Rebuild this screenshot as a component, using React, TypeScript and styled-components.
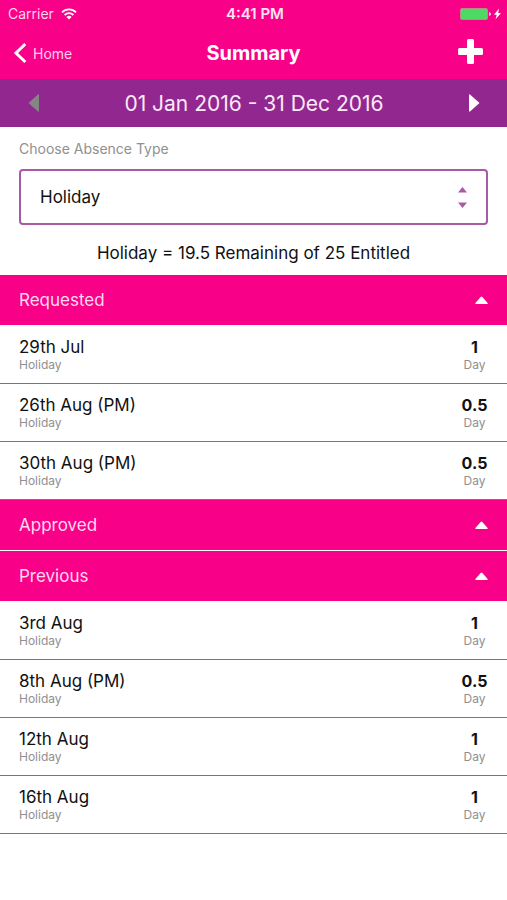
import React, { useState } from "react";
import styled, { createGlobalStyle } from "styled-components";

const pink = "#f90089";
const purple = "#92278f";
const orchid = "#a85aa6";

const GlobalStyle = createGlobalStyle`
  *, *::before, *::after { box-sizing: border-box; }
  body {
    margin: 0;
    background: #fff;
    color: #111;
    font-family: Inter, "Liberation Sans", sans-serif;
  }
  button, select { font: inherit; color: inherit; }
`;

const Screen = styled.main`
  min-height: 100vh;
`;

const TopBar = styled.header`
  background: ${pink};
  color: #fff;
`;

const StatusBar = styled.div`
  display: grid;
  grid-template-columns: 1fr auto 1fr;
  align-items: center;
  height: 27px;
  padding: 0 5px 0 8px;
  font-size: 14px;
`;

const Carrier = styled.div`
  display: flex;
  align-items: center;
  gap: 7px;
  color: #ffd3ec;
`;

const Clock = styled.time`
  font-size: 15px;
  font-weight: 600;
  color: #ffe3f3;
`;

const Battery = styled.div`
  display: flex;
  justify-content: flex-end;
`;

const NavBar = styled.nav`
  display: grid;
  grid-template-columns: 1fr auto 1fr;
  align-items: center;
  height: 52px;
  padding: 0 13px;
`;

const PlainButton = styled.button`
  display: flex;
  align-items: center;
  padding: 0;
  border: 0;
  background: none;
  cursor: pointer;
`;

const BackLink = styled.a`
  display: flex;
  align-items: center;
  gap: 6px;
  color: #ffd3ec;
  font-size: 14px;
  text-decoration: none;
`;

const Title = styled.h1`
  margin: 0;
  font-size: 20px;
  font-weight: 700;
`;

const AddButton = styled(PlainButton)`
  justify-self: end;
  padding: 0 11px 4px;
`;

const DateBar = styled.div`
  display: flex;
  align-items: center;
  justify-content: space-between;
  height: 48px;
  padding: 0 27px 0 28px;
  background: ${purple};
  color: #fbe9fa;
  font-size: 21px;
`;

const TypePanel = styled.section`
  display: flex;
  flex-direction: column;
  padding: 12px 19px 11px;
`;

const FieldLabel = styled.label`
  color: #909090;
  font-size: 14px;
  line-height: 20px;
`;

const SelectBox = styled.div`
  position: relative;
  margin: 10px 0 17px;
`;

const TypeSelect = styled.select`
  display: block;
  appearance: none;
  width: 100%;
  height: 56px;
  padding: 0 44px 0 19px;
  border: 2px solid ${orchid};
  border-radius: 4px;
  background: #fff;
  font-size: 17px;
`;

const SelectArrows = styled.svg`
  position: absolute;
  top: 18px;
  right: 21px;
  pointer-events: none;
`;

const Balance = styled.p`
  margin: 0;
  font-size: 17px;
  line-height: 22px;
  text-align: center;
`;

const SectionHeading = styled.h2`
  margin: 0;
  border-bottom: 1px solid #fff;
  font-size: 17px;
  font-weight: 400;
`;

const SectionToggle = styled(PlainButton)`
  justify-content: space-between;
  width: 100%;
  height: 50px;
  padding: 0 19px;
  background: ${pink};
  color: #ffd9ef;
`;

const Chevron = styled.svg<{ $open: boolean }>`
  transform: ${(p) => (p.$open ? "none" : "rotate(180deg)")};
`;

const List = styled.ul`
  margin: 0;
  padding: 0;
  list-style: none;
`;

const Row = styled.li`
  display: flex;
  align-items: center;
  justify-content: space-between;
  height: 58px;
  padding: 0 19px;
  border-bottom: 1px solid #777;
`;

const Amount = styled.div`
  width: 27px;
  text-align: center;
`;

const Line = styled.div`
  font-size: 17px;
  line-height: 20px;
`;

const Days = styled.div`
  font-size: 16px;
  font-weight: 700;
  line-height: 20px;
`;

const Sub = styled.div`
  color: #909090;
  font-size: 12px;
  line-height: 16px;
`;

type Absence = { date: string; days: string };

const sections: { name: string; items: Absence[] }[] = [
  {
    name: "Requested",
    items: [
      { date: "29th Jul", days: "1" },
      { date: "26th Aug (PM)", days: "0.5" },
      { date: "30th Aug (PM)", days: "0.5" },
    ],
  },
  { name: "Approved", items: [] },
  {
    name: "Previous",
    items: [
      { date: "3rd Aug", days: "1" },
      { date: "8th Aug (PM)", days: "0.5" },
      { date: "12th Aug", days: "1" },
      { date: "16th Aug", days: "1" },
    ],
  },
];

function Section({ name, items }: { name: string; items: Absence[] }) {
  const [open, setOpen] = useState(true);
  return (
    <section>
      <SectionHeading>
        <SectionToggle aria-expanded={open} onClick={() => setOpen(!open)}>
          {name}
          <Chevron $open={open} width="13" height="8" viewBox="0 0 13 8" aria-hidden="true">
            <path d="M0.8 8Q0 8 0.4 7L5.6 1Q6.5 0 7.4 1L12.6 7Q13 8 12.2 8Z" fill="#fff" />
          </Chevron>
        </SectionToggle>
      </SectionHeading>
      {open && (
        <List>
          {items.map((item) => (
            <Row key={item.date}>
              <div>
                <Line>{item.date}</Line>
                <Sub>Holiday</Sub>
              </div>
              <Amount>
                <Days>{item.days}</Days>
                <Sub>Day</Sub>
              </Amount>
            </Row>
          ))}
        </List>
      )}
    </section>
  );
}

export default function App() {
  return (
    <>
      <GlobalStyle />
      <Screen>
        <TopBar>
          <StatusBar>
            <Carrier>
              Carrier
              <svg width="16" height="12" viewBox="0 0 16 12" fill="none" stroke="#fff" strokeWidth="1.8" aria-hidden="true">
                <path d="M1 4.3a10 10 0 0 1 14 0" />
                <path d="M3.6 7a6.3 6.3 0 0 1 8.8 0" />
                <path d="M5.4 8.9a3.8 3.8 0 0 1 5.2 0L8 11.6Z" fill="#fff" stroke="none" />
              </svg>
            </Carrier>
            <Clock>4:41 PM</Clock>
            <Battery>
              <svg width="43" height="14" viewBox="0 0 43 14" role="img" aria-label="Battery charging">
                <rect x="1.5" y="1.5" width="27" height="11" rx="1.5" fill="#4cd964" stroke="#b98a86" />
                <path d="M30 5q2 .3 2 2t-2 2z" fill="#ffd3ec" />
                <path d="M40 1.5L35 7.8h2.7L36.5 12.5L42 6H39.2z" fill="#fff" />
              </svg>
            </Battery>
          </StatusBar>
          <NavBar>
            <BackLink href="#home">
              <svg width="14" height="22" viewBox="0 0 14 22" fill="none" stroke="#fff" strokeWidth="3" aria-hidden="true">
                <path d="M12.3 2L3 11l9.3 9" />
              </svg>
              Home
            </BackLink>
            <Title>Summary</Title>
            <AddButton aria-label="Add absence">
              <svg width="25" height="25" viewBox="0 0 25 25" fill="#fff" aria-hidden="true">
                <rect x="9" y="0" width="7" height="25" rx="1.5" />
                <rect x="0" y="9" width="25" height="7" rx="1.5" />
              </svg>
            </AddButton>
          </NavBar>
        </TopBar>
        <DateBar>
          <PlainButton aria-label="Previous period">
            <svg width="11" height="18" viewBox="0 0 11 18" aria-hidden="true">
              <path d="M11 1v16q0 1-1 .5L1 9.6Q.4 9 1 8.4L10 .5Q11 0 11 1Z" fill="#858585" />
            </svg>
          </PlainButton>
          <span>01 Jan 2016 - 31 Dec 2016</span>
          <PlainButton aria-label="Next period">
            <svg width="11" height="18" viewBox="0 0 11 18" aria-hidden="true">
              <path d="M0 1v16q0 1 1 .5L10 9.6Q10.6 9 10 8.4L1 .5Q0 0 0 1Z" fill="#fff" />
            </svg>
          </PlainButton>
        </DateBar>
        <TypePanel>
          <FieldLabel htmlFor="absence-type">Choose Absence Type</FieldLabel>
          <SelectBox>
            <TypeSelect id="absence-type">
              <option>Holiday</option>
            </TypeSelect>
            <SelectArrows width="9" height="22" viewBox="0 0 9 22" fill={orchid} aria-hidden="true">
              <path d="M0 5.5L4.5 0L9 5.5z" />
              <path d="M0 15.5L4.5 21L9 15.5z" />
            </SelectArrows>
          </SelectBox>
          <Balance>Holiday = 19.5 Remaining of 25 Entitled</Balance>
        </TypePanel>
        {sections.map((s) => (
          <Section key={s.name} name={s.name} items={s.items} />
        ))}
      </Screen>
    </>
  );
}
